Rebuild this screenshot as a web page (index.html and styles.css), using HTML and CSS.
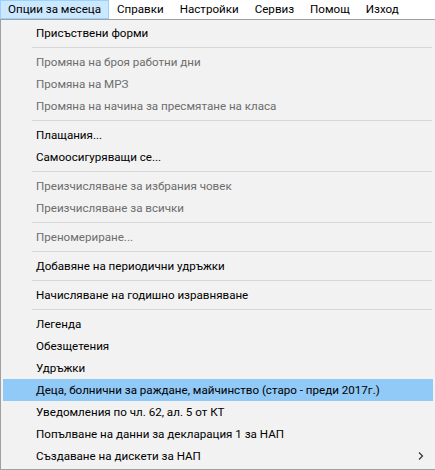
FILE: index.html
```html
<!DOCTYPE html>
<html lang="bg">
<head>
<meta charset="utf-8">
<link rel="stylesheet" href="styles.css">
</head>
<body>
<div class="menubar">
  <div class="top active">Опции за месеца</div>
  <div class="top">Справки</div>
  <div class="top">Настройки</div>
  <div class="top">Сервиз</div>
  <div class="top">Помощ</div>
  <div class="top">Изход</div>
</div>
<div class="dropdown">
  <div class="item">Присъствени форми</div>
  <div class="sep"></div>
  <div class="item disabled">Промяна на броя работни дни</div>
  <div class="item disabled">Промяна на МРЗ</div>
  <div class="item disabled">Промяна на начина за пресмятане на класа</div>
  <div class="sep"></div>
  <div class="item">Плащания...</div>
  <div class="item">Самоосигуряващи се...</div>
  <div class="sep"></div>
  <div class="item disabled">Преизчисляване за избрания човек</div>
  <div class="item disabled">Преизчисляване за всички</div>
  <div class="sep"></div>
  <div class="item disabled">Преномериране...</div>
  <div class="sep"></div>
  <div class="item">Добавяне на периодични удръжки</div>
  <div class="sep"></div>
  <div class="item">Начисляване на годишно изравняване</div>
  <div class="sep"></div>
  <div class="item">Легенда</div>
  <div class="item">Обезщетения</div>
  <div class="item">Удръжки</div>
  <div class="item hot">Деца, болнични за раждане, майчинство (старо - преди 2017г.)</div>
  <div class="item">Уведомления по чл. 62, ал. 5 от КТ</div>
  <div class="item">Попълване на данни за декларация 1 за НАП</div>
  <div class="item sub">Създаване на дискети за НАП
    <svg class="arrow" width="6" height="8" viewBox="0 0 6 8"><path d="M1 0.5 L4.5 4 L1 7.5" fill="none" stroke="#333" stroke-width="1.2"/></svg>
  </div>
</div>
</body>
</html>
```
FILE: styles.css
```css
html, body {
  margin: 0;
  padding: 0;
  background: #ffffff;
  overflow: hidden;
  width: 435px;
  height: 470px;
}
body {
  font-family: Roboto, "Noto Sans", sans-serif;
  font-size: 11.6px;
  color: #000;
}
.menubar {
  display: flex;
  height: 19px;
  background: #fff;
}
.top {
  display: flex;
  align-items: center;
  padding: 0 7px;
  border: 1px solid transparent;
  line-height: 17px;
  white-space: nowrap;
}
.top.active {
  background: #cce8ff;
  border-color: #99d1ff;
}
.dropdown {
  width: 436px;
  box-sizing: border-box;
  border: 1px solid #a0a0a0;
  background: #f2f2f2;
  padding: 2px 2px 2px 2px;
  display: flex;
  flex-direction: column;
}
.item {
  height: 22px;
  line-height: 22px;
  padding-left: 33px;
  white-space: nowrap;
  display: flex;
  align-items: center;
  position: relative;
}
.item.disabled {
  color: #6d6d6d;
}
.item.hot {
  background: #91c9f7;
}
.sep {
  height: 7px;
  margin-left: 29px;
  margin-right: 1px;
  display: flex;
  align-items: center;
}
.sep::before {
  content: "";
  flex: 1;
  height: 1px;
  background: #d7d7d7;
}
.arrow {
  position: absolute;
  right: 9px;
  top: 7px;
}
```
